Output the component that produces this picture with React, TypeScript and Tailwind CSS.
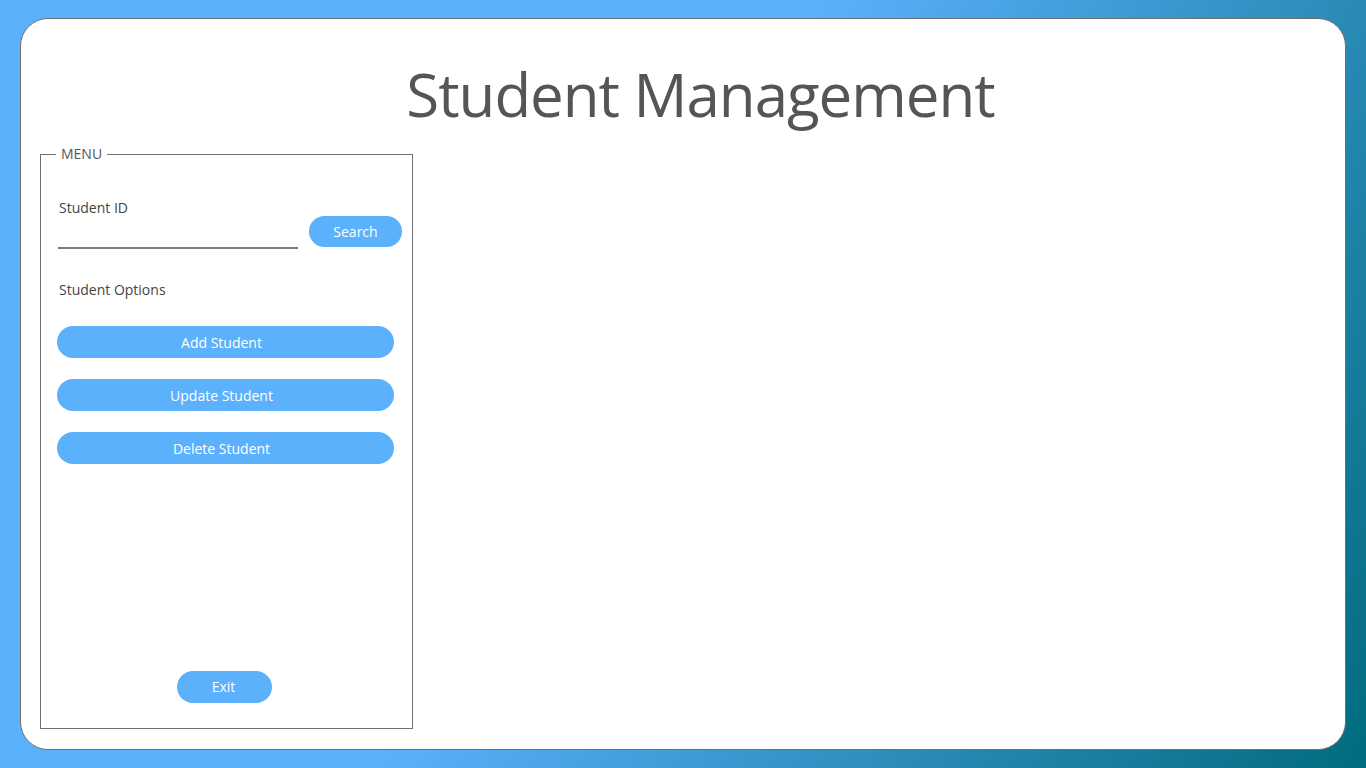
import React from 'react';

const font = { fontFamily: '"Open Sans", "Noto Sans", sans-serif' };

function App() {
  return (
    <div
      className="w-full h-screen pt-[18px] px-[20px] pb-[18px] bg-[linear-gradient(120deg,#5cb1fd_45%,#006b7d_100%)]"
      style={font}
    >
      <div className="h-full bg-white border border-[#6e6e6e] rounded-[28px] flex flex-col px-[19px]">
        {/* Title */}
        <h1 className="mt-[39px] pl-[35px] text-center text-[60px] leading-[72px] tracking-[-1px] text-[#555555]">
          Student Management
        </h1>

        {/* Menu */}
        <fieldset className="mt-[14px] mb-[20px] w-[373px] flex-1 flex flex-col border border-[#707070] p-0 m-0 min-w-0">
          <legend className="ml-[15px] px-[5px] text-[14px] leading-[20px] text-[#555555]">MENU</legend>

          <div className="mt-[34px] flex items-end">
            <div className="ml-[17px] w-[240px] flex flex-col">
              <label className="pl-[1px] text-[14px] leading-[20px] text-[#444444]">Student ID</label>
              <input
                type="text"
                className="h-[31px] border-b-2 border-[#7a7a7a] outline-none text-[14px] text-[#444444] bg-transparent"
              />
            </div>
            <button className="ml-[11px] mb-[2px] w-[93px] h-[31px] rounded-full bg-[#5cb1fd] text-white text-[14px] leading-[20px]">
              Search
            </button>
          </div>

          <div className="mt-[31px] ml-[18px] text-[14px] leading-[20px] text-[#444444]">Student Options</div>

          <div className="mt-[26px] ml-[16px] w-[337px] flex flex-col gap-[21px]">
            {['Add Student', 'Update Student', 'Delete Student'].map((label) => (
              <button
                key={label}
                className="h-[32px] rounded-full bg-[#5cb1fd] text-white text-[14px] leading-[20px] pr-[8px] pt-[2px]"
              >
                {label}
              </button>
            ))}
          </div>

          <button className="mt-auto mb-[25px] ml-[136px] self-start w-[95px] h-[32px] rounded-full bg-[#5cb1fd] text-white text-[14px] leading-[20px] pr-[2px]">
            Exit
          </button>
        </fieldset>
      </div>
    </div>
  );
}

export default App;
